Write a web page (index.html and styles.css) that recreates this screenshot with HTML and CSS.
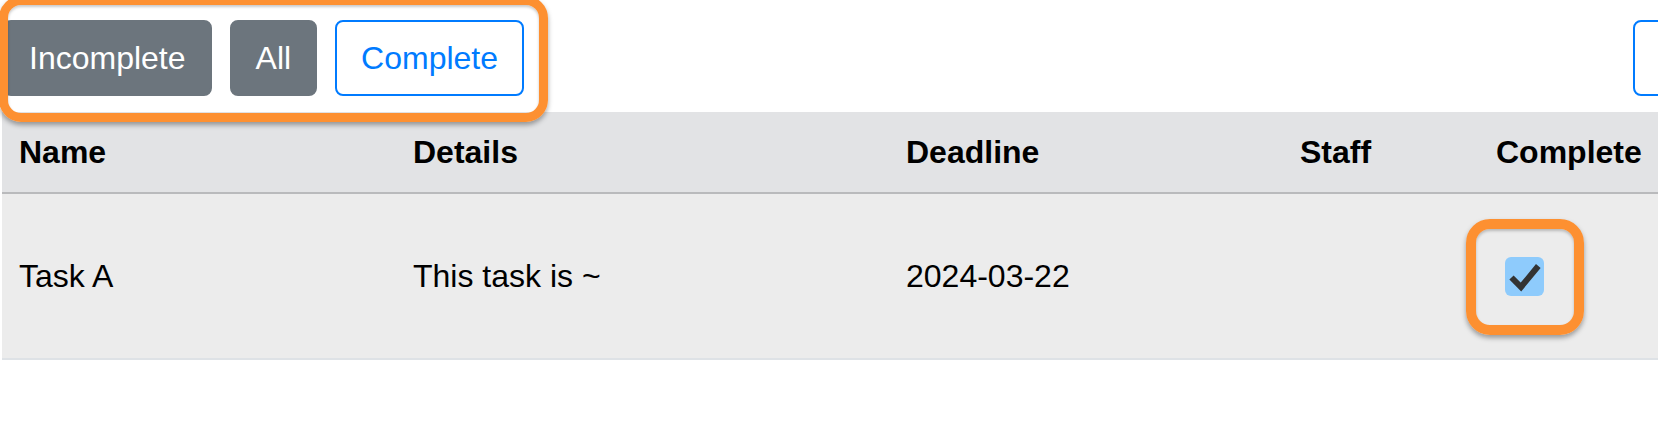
FILE: index.html
```html
<!DOCTYPE html>
<html lang="en">
<head>
<meta charset="utf-8">
<title>Tasks</title>
<link rel="stylesheet" href="styles.css">
</head>
<body>
<div class="page">
  <div class="toolbar">
    <div class="filters">
      <button class="btn btn-secondary">Incomplete</button>
      <button class="btn btn-secondary">All</button>
      <button class="btn btn-outline">Complete</button>
      <span class="highlight highlight-filters"></span>
    </div>
    <button class="btn btn-outline btn-create" aria-label="Create"></button>
  </div>
  <table class="tasks">
    <colgroup>
      <col class="col-name">
      <col class="col-details">
      <col class="col-deadline">
      <col class="col-staff">
      <col class="col-complete">
    </colgroup>
    <thead>
      <tr>
        <th>Name</th>
        <th>Details</th>
        <th>Deadline</th>
        <th>Staff</th>
        <th>Complete</th>
      </tr>
    </thead>
    <tbody>
      <tr>
        <td>Task A</td>
        <td>This task is ~</td>
        <td>2024-03-22</td>
        <td></td>
        <td>
          <span class="check-wrap">
            <svg class="checkbox" width="39" height="39" viewBox="0 0 39 39" aria-label="checked">
              <rect x="0" y="0" width="39" height="39" rx="6" ry="6" fill="#8ecbfc"/>
              <polyline points="6.5,20.5 16,30 33.3,9" fill="none" stroke="#333333" stroke-width="6" stroke-linecap="butt" stroke-linejoin="miter"/>
            </svg>
            <span class="highlight highlight-check"></span>
          </span>
        </td>
      </tr>
    </tbody>
  </table>
</div>
</body>
</html>
```

FILE: styles.css
```css
html, body {
  margin: 0;
  padding: 0;
  overflow: hidden;
  background: #ffffff;
}

body {
  font-family: "Liberation Sans", Arial, sans-serif;
  font-size: 32px;
  line-height: 48px;
  color: #111111;
}

.page {
  width: 1779px;
  padding-left: 2px;
}

.toolbar {
  display: flex;
  justify-content: space-between;
  align-items: flex-start;
  padding-top: 20px;
  margin-bottom: 16px;
}

.filters {
  position: relative;
  display: flex;
  gap: 18px;
  margin-left: 1px;
}

.btn {
  box-sizing: border-box;
  height: 76px;
  padding: 12px 24px;
  border: 2px solid transparent;
  border-radius: 8px;
  font: inherit;
  font-size: 32px;
  line-height: 48px;
  cursor: pointer;
}

.btn-secondary {
  background: #6c757d;
  border-color: #6c757d;
  color: #ffffff;
}

.btn-outline {
  background: #ffffff;
  border-color: #007bff;
  color: #007bff;
}

.btn-create {
  width: 148px;
}

.highlight {
  position: absolute;
  box-sizing: border-box;
  border: 9px solid #fd9031;
  pointer-events: none;
  box-shadow: 0 3px 5px rgba(0, 0, 0, 0.35), inset 0 2px 3px rgba(0, 0, 0, 0.22);
}

.highlight-filters {
  left: -4px;
  top: -24px;
  width: 549px;
  height: 126px;
  border-radius: 22px;
}

.tasks {
  width: 1779px;
  border-collapse: collapse;
  table-layout: fixed;
}

.col-name { width: 394px; }
.col-details { width: 493px; }
.col-deadline { width: 394px; }
.col-staff { width: 196px; }

.tasks th {
  background: #e2e3e5;
  text-align: left;
  font-weight: bold;
  color: #000000;
  padding: 16px 17px;
  height: 48px;
  border-bottom: 2px solid #b9babc;
}

.tasks td {
  background: #ececec;
  padding: 0 17px;
  height: 164px;
  vertical-align: middle;
  border-bottom: 2px solid #dee2e6;
  color: #000000;
}

.check-wrap {
  position: relative;
  display: inline-block;
  width: 39px;
  height: 39px;
  margin-left: 9px;
  vertical-align: middle;
  top: -2px;
}

.checkbox {
  display: block;
}

.highlight-check {
  left: -39px;
  top: -38px;
  width: 118px;
  height: 116px;
  border-width: 10px;
  border-radius: 24px;
}
```
